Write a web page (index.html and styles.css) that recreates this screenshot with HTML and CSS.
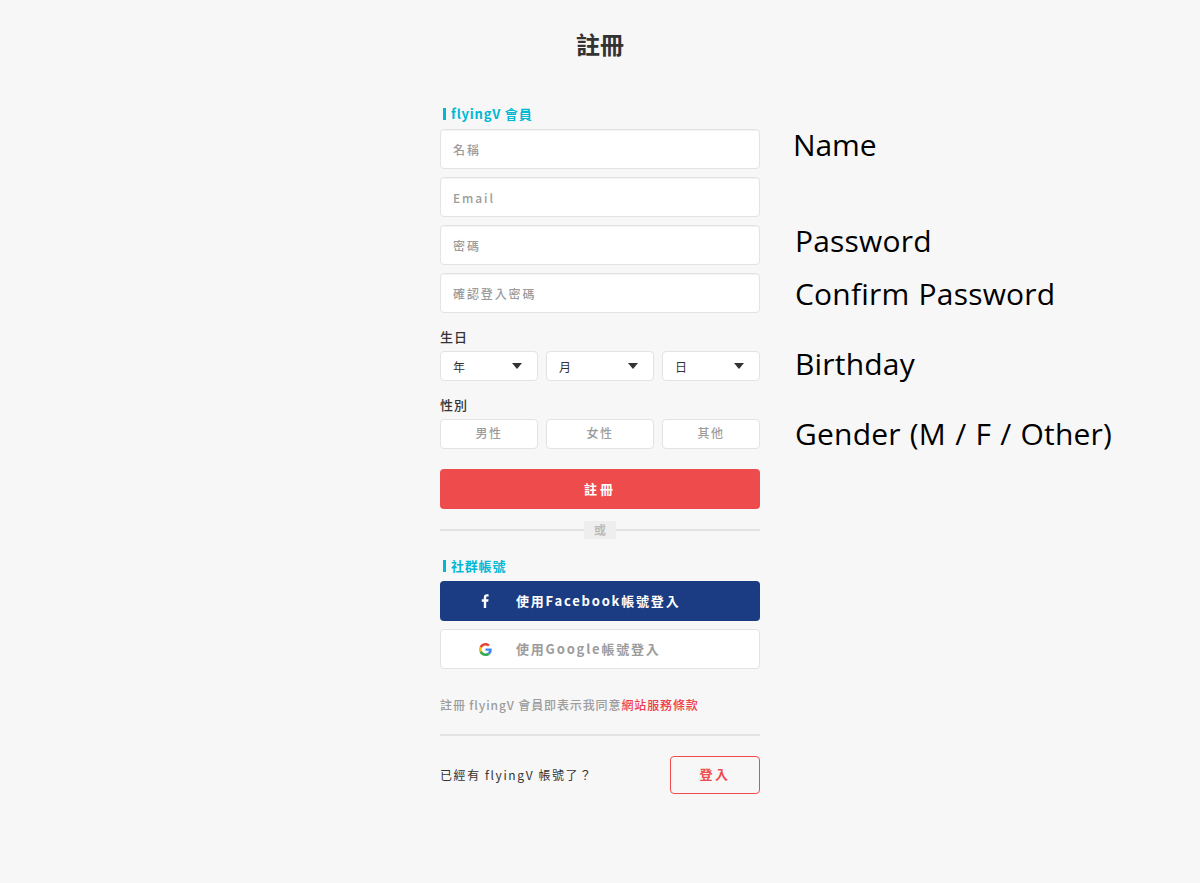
FILE: index.html
```html
<!DOCTYPE html>
<html lang="zh-Hant">
<head>
  <meta charset="UTF-8">
  <meta name="viewport" content="width=device-width, initial-scale=1.0">
  <link rel="stylesheet" href="styles.css">
  <title>註冊</title>
</head>
<body>
  <h1 class="pageTitle">註冊</h1>

  <div class="formWrap">
    <form class="signupForm">
      <div class="sectionLabel">flyingV 會員</div>
      <input class="textInput" type="text" placeholder="名稱">
      <input class="textInput" type="text" placeholder="Email">
      <input class="textInput" type="password" placeholder="密碼">
      <input class="textInput" type="password" placeholder="確認登入密碼">

      <div class="fieldLabel">生日</div>
      <div class="threeCols">
        <div class="selectBox"><span>年</span><i class="caret"></i></div>
        <div class="selectBox"><span>月</span><i class="caret"></i></div>
        <div class="selectBox"><span>日</span><i class="caret"></i></div>
      </div>

      <div class="fieldLabel">性別</div>
      <div class="threeCols">
        <button class="genderBtn" type="button">男性</button>
        <button class="genderBtn" type="button">女性</button>
        <button class="genderBtn" type="button">其他</button>
      </div>

      <button class="submitBtn" type="button">註冊</button>

      <div class="orLine"><span>或</span></div>

      <div class="sectionLabel">社群帳號</div>
      <button class="socialBtn fbBtn" type="button">
        <span class="socialIcon">
          <svg width="8" height="14" viewBox="0 0 8 14"><path fill="#fff" d="M5.2 14V7.7h2l.3-2.4H5.2V3.8c0-.7.2-1.2 1.2-1.2h1.2V.5C7.4.4 6.7.3 5.9.3 4.1.3 2.8 1.4 2.8 3.500v1.800H.8v2.400h2V14z"/></svg>
        </span>
        使用Facebook帳號登入
      </button>
      <button class="socialBtn googleBtn" type="button">
        <span class="socialIcon">
          <svg width="13" height="13" viewBox="0 0 48 48">
            <path fill="#EA4335" d="M24 9.500c3.500 0 6.700 1.200 9.200 3.600l6.900-6.900C35.900 2.400 30.500 0 24 0 14.600 0 6.500 5.400 2.600 13.200l8 6.200C12.500 13.600 17.800 9.500 24 9.500z"/>
            <path fill="#4285F4" d="M46.980 24.550c0-1.570-.15-3.090-.38-4.550H24v9.020h12.940c-.58 2.960-2.260 5.480-4.780 7.180l7.730 6c4.510-4.180 7.090-10.360 7.090-17.650z"/>
            <path fill="#FBBC05" d="M10.530 28.590A14.500 14.500 0 0 1 9.500 24c0-1.600.28-3.150 1.030-4.590l-7.980-6.190A23.900 23.900 0 0 0 0 24c0 3.870.92 7.540 2.560 10.780l7.970-6.190z"/>
            <path fill="#34A853" d="M24 48c6.480 0 11.930-2.130 15.890-5.810l-7.730-6c-2.150 1.450-4.920 2.300-8.160 2.300-6.260 0-11.570-4.220-13.470-9.910l-7.980 6.190C6.510 42.620 14.620 48 24 48z"/>
          </svg>
        </span>
        使用Google帳號登入
      </button>

      <p class="terms">註冊 flyingV 會員即表示我同意<a href="#">網站服務條款</a></p>

      <div class="loginRow">
        <span class="loginText">已經有 flyingV 帳號了？</span>
        <button class="loginBtn" type="button">登入</button>
      </div>
    </form>

    <!-- english notes sitting on top of the screenshot -->
    <div class="note noteName">Name</div>
    <div class="note notePassword">Password</div>
    <div class="note noteConfirm">Confirm Password</div>
    <div class="note noteBirthday">Birthday</div>
    <div class="note noteGender">Gender (M / F / Other)</div>
  </div>
</body>
</html>
```

FILE: styles.css
```css
* {
  box-sizing: border-box;
}

body {
  margin: 0;
  min-height: 883px;
  background-color: #f7f7f7;
  color: #333;
  font-family: "Noto Sans CJK TC", "Noto Sans", sans-serif;
}

.pageTitle {
  margin: 0;
  padding-top: 26px;
  height: 106px;
  font-size: 24px;
  line-height: 36px;
  font-weight: 700;
  text-align: center;
  color: #333;
}

.formWrap {
  position: relative;
  width: 320px;
  margin: 0 auto;
}

.signupForm {
  display: flex;
  flex-direction: column;
}

.sectionLabel {
  display: flex;
  align-items: center;
  height: 23px;
  padding-bottom: 9px;
  font-size: 13px;
  font-weight: 700;
  letter-spacing: 0.8px;
  color: #00b8d4;
}

.sectionLabel::before {
  content: "";
  width: 3px;
  height: 12px;
  margin: 2px 5px 0 3px;
  background-color: #00b8d4;
}

.textInput {
  height: 40px;
  margin-bottom: 8px;
  padding: 0 12px;
  border: 1px solid #e3e3e3;
  border-radius: 4px;
  background-color: #fff;
  box-shadow: inset 0 1px 1px rgba(0, 0, 0, 0.05);
  font-family: inherit;
  font-size: 12px;
  font-weight: 500;
  letter-spacing: 1.9px;
}

.textInput::placeholder {
  color: #9c9c9c;
  opacity: 1;
}

.fieldLabel {
  height: 24px;
  font-size: 13px;
  line-height: 32px;
  font-weight: 500;
  letter-spacing: 1px;
  color: #333;
}

.fieldLabel + .threeCols {
  margin-top: 6px;
}

.threeCols {
  display: grid;
  grid-template-columns: 98px 108px 98px;
  gap: 8px;
  margin-bottom: 8px;
}

.selectBox {
  display: flex;
  align-items: center;
  justify-content: space-between;
  height: 30px;
  padding: 0 15px 0 12px;
  border: 1px solid #e3e3e3;
  border-radius: 4px;
  background-color: #fff;
  font-size: 12px;
  color: #333;
}

.caret {
  width: 0;
  height: 0;
  border-left: 5.5px solid transparent;
  border-right: 5.5px solid transparent;
  border-top: 6px solid #333;
}

.genderBtn {
  height: 30px;
  padding: 0 0 3px;
  border: 1px solid #e3e3e3;
  border-radius: 4px;
  background-color: #fff;
  font-family: inherit;
  font-size: 12px;
  font-weight: 500;
  letter-spacing: 1.5px;
  color: #9c9c9c;
}

.submitBtn {
  height: 40px;
  margin-top: 12px;
  padding: 0 0 2px;
  border: 0;
  border-radius: 4px;
  background-color: #ee4b4d;
  font-family: inherit;
  font-size: 13px;
  font-weight: 700;
  letter-spacing: 3px;
  color: #fff;
}

.orLine {
  display: flex;
  align-items: center;
  justify-content: center;
  height: 18px;
  margin: 12px 0 19px;
  background: linear-gradient(#e3e3e3, #e3e3e3) center / 100% 2px no-repeat;
}

.orLine span {
  width: 32px;
  height: 18px;
  background-color: #eee;
  font-size: 12px;
  font-weight: 700;
  line-height: 18px;
  text-align: center;
  color: #bbb;
}

.socialBtn {
  display: flex;
  align-items: center;
  height: 40px;
  margin-bottom: 8px;
  padding: 0 0 2px;
  border-radius: 4px;
  font-family: inherit;
  font-size: 13px;
  font-weight: 700;
  letter-spacing: 1.8px;
}

.socialIcon {
  display: flex;
  align-items: center;
  justify-content: center;
  width: 76px;
  padding: 2px 0 0 14px;
}

.fbBtn {
  border: 0;
  background-color: #1b3c82;
  color: #fff;
}

.googleBtn {
  border: 1px solid #e3e3e3;
  background-color: #fff;
  color: #9c9c9c;
}

.googleBtn .socialIcon {
  width: 75px;
}

.terms {
  height: 40px;
  margin: 19px 0 0;
  border-bottom: 2px solid #e3e3e3;
  font-size: 12px;
  line-height: 18px;
  font-weight: 500;
  letter-spacing: 0.88px;
  color: #9c9c9c;
}

.terms a {
  color: #ef3b4d;
  text-decoration: none;
}

.loginRow {
  display: flex;
  align-items: center;
  justify-content: space-between;
  margin-top: 20px;
  font-size: 12px;
  letter-spacing: 1.6px;
  color: #333;
}

.loginText {
  margin-bottom: 2px;
}

.loginBtn {
  width: 90px;
  height: 38px;
  padding: 0 0 3px;
  border: 1px solid #ef4b4d;
  border-radius: 4px;
  background: transparent;
  font-family: inherit;
  font-size: 13px;
  font-weight: 700;
  letter-spacing: 2.5px;
  color: #ef4b4d;
}

.note {
  position: absolute;
  left: 355px;
  font-family: "Open Sans", "Noto Sans", sans-serif;
  font-size: 30px;
  line-height: 40px;
  letter-spacing: 0.2px;
  word-spacing: 1.1px;
  white-space: nowrap;
  color: #000;
}

.noteName { top: 19px; left: 353px; letter-spacing: -0.1px; }
.notePassword { top: 115px; }
.noteConfirm { top: 168px; }
.noteBirthday { top: 238px; }
.noteGender { top: 308px; }
```
